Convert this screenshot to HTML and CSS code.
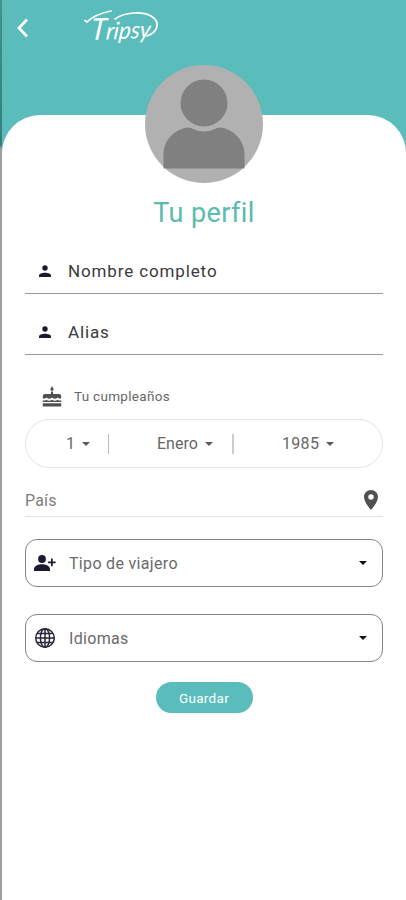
FILE: index.html
```html
<!DOCTYPE html>
<html lang="es">
<head>
<meta charset="utf-8">
<title>Tripsy - Tu perfil</title>
<link rel="stylesheet" href="styles.css">
</head>
<body>
<div class="screen">
  <header class="topbar">
    <svg class="back" width="14" height="22" viewBox="0 0 14 22"><path d="M11 2.500 3 11l8 8.500"/></svg>
    <svg class="logo" width="80" height="42" viewBox="0 0 80 42">
      <text class="logo-word" transform="translate(8 34) rotate(-2) skewX(-8)" textLength="60" lengthAdjust="spacingAndGlyphs"><tspan class="logo-cap">T</tspan>ripsy</text>
      <path d="M3 14.500l2 1.500C11 10 19 7 29 5M33 13C43 6 60 5 69 10C79 16 76 26 65 30"/>
    </svg>
  </header>
  <main class="card">
    <svg class="avatar" width="118" height="118" viewBox="0 0 118 118">
      <circle class="avatar-bg" cx="59" cy="59" r="59"/>
      <circle class="avatar-fg" cx="59" cy="38" r="23.500"/>
      <path class="avatar-fg" d="M18.500 103.500V90C18.500 75 29 65 42 62.500Q45 62 48 64Q59 69 70 64Q73 62 76 62.500C89 65 99.500 75 99.500 90V103.500Z"/>
    </svg>
    <h1 class="title">Tu perfil</h1>
    <form class="form">
      <div class="line-field">
        <svg class="person" width="12" height="12" viewBox="0 0 12 12"><circle cx="6" cy="3" r="2.700"/><path d="M0 12v-1.500C0 6.700 12 6.700 12 10.500V12Z"/></svg>
        <span class="name">Nombre completo</span>
      </div>
      <div class="line-field second">
        <svg class="person" width="12" height="12" viewBox="0 0 12 12"><circle cx="6" cy="3" r="2.700"/><path d="M0 12v-1.500C0 6.700 12 6.700 12 10.500V12Z"/></svg>
        <span class="alias">Alias</span>
      </div>
      <div class="birthday">
        <svg width="20" height="21" viewBox="0 0 20 21">
          <path d="M10 0 11.700 3.200Q11.500 4.700 10 4.700T8.300 3.200ZM9 5.500h2v2.500h6q2.200 0 2.200 2.200v2q-1.900 1.200-3.500-.6-2.700 2.400-5.700 0-2.800 2.400-5.600 0-1.600 1.800-3.600.6v-2q0-2.200 2.200-2.200h6ZM.8 14.300q2.100.7 3.500-.6 2.700 2 5.700 0 2.900 2 5.700 0 1.400 1.300 3.500.6v1.700H.8ZM.8 17.300h18.400v3.200H.8Z"/>
        </svg>
        <span>Tu cumpleaños</span>
      </div>
      <div class="date">
        <div class="part day"><span>1</span><i class="caret"></i></div>
        <div class="part month"><span>Enero</span><i class="caret"></i></div>
        <div class="part year"><span>1985</span><i class="caret"></i></div>
      </div>
      <div class="country">
        <span>País</span>
        <svg width="14" height="20" viewBox="0 0 14 20"><path fill-rule="evenodd" d="M7 0C3.100 0 0 3.100 0 7c0 5.200 7 13 7 13s7-7.800 7-13c0-3.900-3.100-7-7-7Zm0 4.300a2.700 2.700 0 1 1 0 5.400 2.700 2.700 0 0 1 0-5.400Z"/></svg>
      </div>
      <div class="select">
        <svg class="select-icon" width="22" height="16" viewBox="0 0 22 16"><circle cx="8" cy="4" r="3.900"/><path d="M0 16v-1.700C0 7.500 16 7.500 16 14.300V16ZM17 3.500h1.700v3h2.900v1.700h-2.900v3H17v-3h-2.900V6.500H17Z"/></svg>
        <span class="traveller">Tipo de viajero</span>
        <i class="caret dark"></i>
      </div>
      <div class="select languages">
        <svg class="select-icon globe" width="22" height="22" viewBox="0 0 22 22"><circle cx="11" cy="11" r="9.300"/><ellipse cx="11" cy="11" rx="4.600" ry="9.300"/><path d="M11 1.700v18.600M1.700 11h18.600M3.200 6.500h15.600M3.200 15.500h15.600"/></svg>
        <span class="language">Idiomas</span>
        <i class="caret dark"></i>
      </div>
      <button class="save" type="button">Guardar</button>
    </form>
  </main>
</div>
</body>
</html>
```

FILE: styles.css
```css
* {
  box-sizing: border-box;
}

body {
  margin: 0;
  font-family: Roboto, "Liberation Sans", sans-serif;
  background: #fff;
}

.screen {
  height: 900px;
  overflow: hidden;
  border-left: 2px solid;
  border-image: linear-gradient(#468f8d 0, #347f7c 145px, #a0a0a0 150px, #a0a0a0 100%) 1;
  border-width: 0 0 0 2px;
  background: linear-gradient(#5abdbb 160px, #fff 160px);
}

.topbar {
  display: flex;
  align-items: flex-start;
  height: 115px;
  padding: 6px 0 0 14px;
}

.back {
  margin-top: 11px;
  fill: none;
  stroke: #fff;
  stroke-width: 2.8;
}

.logo {
  margin-left: 52px;
  fill: none;
  stroke: #fff;
  stroke-width: 1.7;
  stroke-linecap: round;
}

.logo-word {
  font: italic 24px Lato, sans-serif;
  fill: #fff;
  stroke: none;
}

.logo-cap {
  font-size: 30px;
}

.card {
  display: flex;
  flex-direction: column;
  align-items: center;
  height: 785px;
  padding: 0 23px;
  background: #fff;
  border-radius: 38px 38px 0 0;
}

.avatar {
  flex: none;
  margin-top: -50px;
}

.avatar-bg {
  fill: #b1b1b1;
}

.avatar-fg {
  fill: #808080;
}

.title {
  margin: 14px 0 0;
  font-size: 27px;
  font-weight: 400;
  line-height: 32px;
  letter-spacing: 0.4px;
  color: #5abbae;
}

.form {
  display: flex;
  flex-direction: column;
  width: 358px;
  margin-top: 19px;
}

.line-field {
  display: flex;
  align-items: center;
  height: 46px;
  padding-left: 14px;
  border-bottom: 1px solid #999;
  font-size: 17px;
  letter-spacing: 0.87px;
  color: #3a3a3a;
}

.line-field.second {
  margin-top: 15px;
}

.person {
  width: 12px;
  margin-right: 17px;
  fill: #1c1a30;
}

.birthday {
  display: flex;
  align-items: center;
  gap: 12px;
  height: 22px;
  margin-top: 30px;
  padding-left: 17px;
  font-size: 13.5px;
  letter-spacing: 0.3px;
  color: #666;
}

.birthday svg,
.country svg {
  fill: #505050;
}

.date {
  display: flex;
  align-items: center;
  height: 49px;
  margin-top: 12px;
  border: 1px solid #e4e4e4;
  border-radius: 25px;
  font-size: 16px;
  color: #666;
}

.part {
  display: flex;
  align-items: center;
  height: 20px;
}

.day {
  width: 83px;
  padding-left: 40px;
  border-right: 1px solid #bbb;
}

.month {
  width: 125px;
  padding-left: 48px;
  border-right: 2px solid #ccc;
}

.year {
  padding-left: 48px;
  letter-spacing: 0.3px;
}

.caret {
  width: 0;
  height: 0;
  margin-left: 7px;
  border: 4.500px solid transparent;
  border-top-color: #5b5b5b;
  border-bottom: 0;
}

.country {
  display: flex;
  align-items: center;
  justify-content: space-between;
  height: 33px;
  margin-top: 16px;
  padding-right: 5px;
  border-bottom: 1px solid #e2e2e2;
  font-size: 16px;
  letter-spacing: 0.2px;
  color: #7d7d7d;
}

.select {
  display: flex;
  align-items: center;
  height: 48px;
  margin-top: 22px;
  padding: 0 15px 0 8px;
  border: 1px solid #858585;
  border-radius: 12px;
  font-size: 16px;
  letter-spacing: 0.32px;
  color: #6a6a6a;
}

.languages {
  margin-top: 27px;
}

.select-icon {
  margin-right: 13px;
  fill: #1c1a30;
}

.globe {
  fill: none;
  stroke: #292738;
  stroke-width: 1.5;
}

.dark {
  margin-left: auto;
  border-top-color: #111;
}

.save {
  align-self: center;
  width: 97px;
  height: 31px;
  margin-top: 20px;
  padding: 0;
  border: 0;
  border-radius: 16px;
  background: #5abdbb;
  color: #fff;
  font: 400 13.5px Roboto, sans-serif;
  letter-spacing: 0.3px;
}
```
